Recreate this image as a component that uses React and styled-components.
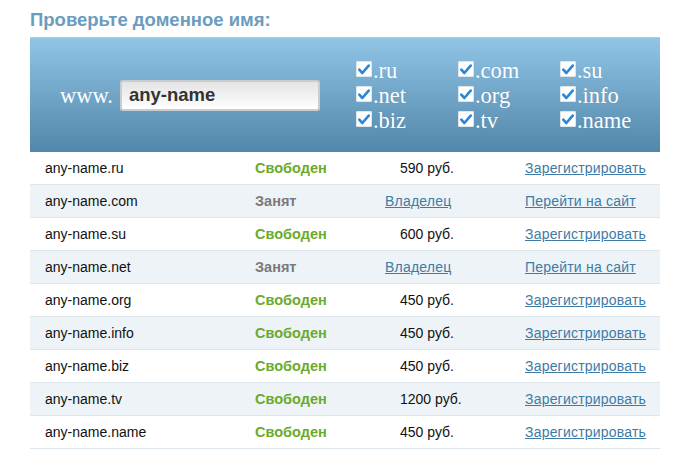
import React from "react";
import styled, { createGlobalStyle } from "styled-components";

const GlobalStyle = createGlobalStyle`
    body {
        margin: 0;
        background: #fff;
        font-family: "Liberation Sans", Arial, sans-serif;
    }
`;

const Page = styled.div`
    width: 690px;
    padding: 10px 30px 0 30px;
    box-sizing: border-box;
`;

const Title = styled.h2`
    margin: 0 0 7px 0;
    font-size: 18.5px;
    font-weight: bold;
    color: #6b9cbd;
    line-height: 20px;
`;

const Header = styled.div`
    height: 115px;
    border-top: 1px solid #a3d2ee;
    background: linear-gradient(to bottom, #91c5e6 0%, #5286aa 100%);
    display: flex;
    align-items: center;
    padding-left: 30px;
    box-sizing: border-box;
`;

const Www = styled.span`
    font-family: "Liberation Serif", "Times New Roman", serif;
    font-size: 22.5px;
    color: #fff;
    margin-right: 7px;
    margin-top: 2px;
`;

const Input = styled.input`
    width: 200px;
    height: 31px;
    box-sizing: border-box;
    border: 2px solid #c9cdd0;
    border-radius: 3px;
    background: linear-gradient(to bottom, #e4e4e4 0%, #ffffff 100%);
    font-family: "Liberation Sans", Arial, sans-serif;
    font-size: 18.5px;
    font-weight: bold;
    color: #333;
    padding: 0 0 0 7px;
    outline: none;
`;

const Zones = styled.div`
    margin-left: 36px;
    display: grid;
    grid-template-columns: 102px 102px 102px;
    grid-auto-rows: 25px;
    margin-top: 1px;
`;

const Zone = styled.label`
    display: flex;
    align-items: center;
    font-family: "Liberation Serif", "Times New Roman", serif;
    font-size: 22.5px;
    color: #fff;
    text-shadow: 0 0 1px rgba(0, 0, 0, 0.15);
`;

const Box = styled.span`
    width: 16px;
    height: 16px;
    background: #fff;
    border-radius: 2px;
    display: inline-flex;
    align-items: center;
    justify-content: center;
    margin-right: 1px;
    margin-top: -3px;
    box-shadow: inset 0 0 0 1px #dfe6ea;
`;

const Rows = styled.div`
    display: flex;
    flex-direction: column;
`;

const Row = styled.div`
    display: grid;
    grid-template-columns: 210px 130px 140px 150px;
    height: 33px;
    box-sizing: border-box;
    align-items: center;
    padding-left: 15px;
    background: ${(p) => (p.$alt ? "#edf3f6" : "#fff")};
    border-bottom: 1px solid #dde6eb;
    font-size: 14px;
    color: #111;
`;

const Status = styled.span`
    font-size: 14.5px;
    font-weight: bold;
    color: ${(p) => (p.$free ? "#6aab2b" : "#7a7a7a")};
`;

const Price = styled.span`
    padding-left: ${(p) => (p.$link ? "0" : "15px")};
`;

const Link = styled.a`
    color: #3e7ba6;
    text-decoration: underline;
    letter-spacing: 0.2px;
    cursor: pointer;
`;

const zones = [".ru", ".com", ".su", ".net", ".org", ".info", ".biz", ".tv", ".name"];

const rows = [
    { name: "any-name.ru", free: true, price: "590 руб." },
    { name: "any-name.com", free: false },
    { name: "any-name.su", free: true, price: "600 руб." },
    { name: "any-name.net", free: false },
    { name: "any-name.org", free: true, price: "450 руб." },
    { name: "any-name.info", free: true, price: "450 руб." },
    { name: "any-name.biz", free: true, price: "450 руб." },
    { name: "any-name.tv", free: true, price: "1200 руб." },
    { name: "any-name.name", free: true, price: "450 руб." },
];

const Check = () => (
    <svg width="12" height="11" viewBox="0 0 11 10">
        <path d="M1.2 5.2 L4 8.2 L9.8 1.4" fill="none" stroke="#2a86d6" strokeWidth="2.4" strokeLinecap="round" strokeLinejoin="round" />
    </svg>
);

const App = () => {
    return (
        <Page>
            <GlobalStyle />
            <Title>Проверьте доменное имя:</Title>
            <Header>
                <Www>www.</Www>
                <Input defaultValue="any-name" />
                <Zones>
                    {zones.map((z) => (
                        <Zone key={z}>
                            <Box>
                                <Check />
                            </Box>
                            {z}
                        </Zone>
                    ))}
                </Zones>
            </Header>
            <Rows>
                {rows.map((r, i) => (
                    <Row key={r.name} $alt={i % 2 === 1 && i !== 8}>
                        <span>{r.name}</span>
                        <Status $free={r.free}>{r.free ? "Свободен" : "Занят"}</Status>
                        {r.free ? (
                            <Price>{r.price}</Price>
                        ) : (
                            <Price $link>
                                <Link>Владелец</Link>
                            </Price>
                        )}
                        <span>
                            <Link>{r.free ? "Зарегистрировать" : "Перейти на сайт"}</Link>
                        </span>
                    </Row>
                ))}
            </Rows>
        </Page>
    );
};

export default App;
